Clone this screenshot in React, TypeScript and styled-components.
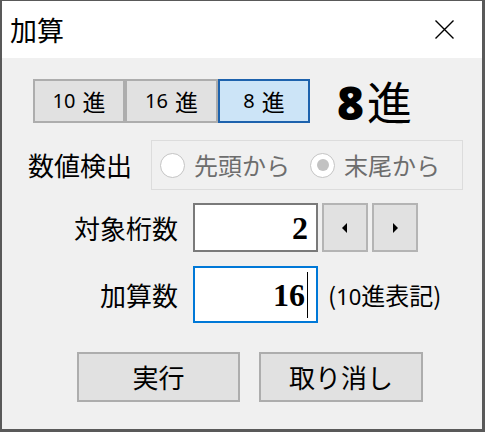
import styled, { createGlobalStyle } from "styled-components";

const GlobalStyle = createGlobalStyle`
  html, body {
    margin: 0;
    padding: 0;
    background: #ffffff;
  }
`;

const UI_FONT = `"Noto Sans CJK JP", "Noto Sans", sans-serif`;

const Window = styled.div`
  width: 485px;
  height: 432px;
  box-sizing: border-box;
  border-style: solid;
  border-color: #595959;
  border-width: 1px 3px 3px 2px;
  display: flex;
  flex-direction: column;
  background: #f0f0f0;
  font-family: ${UI_FONT};
  color: #000;
`;

const TitleBar = styled.div`
  height: 57px;
  flex: none;
  background: #ffffff;
  display: flex;
  align-items: center;
  justify-content: space-between;
  padding: 0 28px 0 8px;
`;

const Title = styled.span`
  font-size: 27px;
  line-height: 1;
  font-weight: 400;
`;

const CloseIcon = styled.svg`
  width: 19px;
  height: 19px;
  display: block;
`;

const Body = styled.div`
  flex: 1;
  display: flex;
  flex-direction: column;
`;

const Row = styled.div<{ $top: number; $left: number; $height: number }>`
  display: flex;
  align-items: center;
  margin-top: ${(p) => p.$top}px;
  padding-left: ${(p) => p.$left}px;
  height: ${(p) => p.$height}px;
`;

const SegGroup = styled.div`
  display: flex;
  height: 100%;
`;

const SegButton = styled.div<{ $active?: boolean; $width: number }>`
  width: ${(p) => p.$width}px;
  height: 100%;
  box-sizing: border-box;
  border: 2px solid ${(p) => (p.$active ? "#1d62ad" : "#adadad")};
  background: ${(p) => (p.$active ? "#cce4f7" : "#e1e1e1")};
  display: flex;
  align-items: center;
  justify-content: center;
  gap: 7px;
  font-size: 23px;
  line-height: 1;
`;

const SegNum = styled.span`
  font-family: "Noto Sans", sans-serif;
  font-size: 20px;
`;

const BigLabel = styled.div`
  margin-left: 27px;
  font-size: 45px;
  line-height: 1;
  display: flex;
  align-items: baseline;
`;

const BigNum = styled.span`
  font-family: "Open Sans", "Noto Sans", sans-serif;
  font-weight: 800;
  font-size: 46px;
  margin-right: 3px;
`;

const Label = styled.div<{ $width: number; $align?: string }>`
  width: ${(p) => p.$width}px;
  flex: none;
  font-size: 26px;
  line-height: 1;
  text-align: ${(p) => p.$align || "left"};
`;

const GroupBox = styled.div`
  width: 312px;
  height: 100%;
  box-sizing: border-box;
  border: 1px solid #dcdcdc;
  display: flex;
  align-items: center;
  padding-left: 8px;
  gap: 20px;
`;

const RadioItem = styled.div`
  display: flex;
  align-items: center;
  gap: 9px;
  color: #6d6d6d;
  font-size: 24px;
  line-height: 1;
`;

const RadioCircle = styled.span<{ $checked?: boolean }>`
  width: 25px;
  height: 25px;
  box-sizing: border-box;
  border-radius: 50%;
  border: 1px solid #c4c4c4;
  background: #ffffff;
  display: flex;
  align-items: center;
  justify-content: center;

  &::after {
    content: "";
    display: ${(p) => (p.$checked ? "block" : "none")};
    width: 12px;
    height: 12px;
    border-radius: 50%;
    background: #c2c2c2;
  }
`;

const Field = styled.div<{ $focused?: boolean }>`
  width: 125px;
  height: 100%;
  margin-left: 15px;
  box-sizing: border-box;
  border: 2px solid ${(p) => (p.$focused ? "#0078d7" : "#7a7a7a")};
  background: #ffffff;
  display: flex;
  align-items: center;
  justify-content: flex-end;
  padding-right: 8px;
  font-family: "Liberation Serif", serif;
  font-weight: 700;
  font-size: 32px;
  line-height: 1;
`;

const Caret = styled.span`
  width: 1px;
  height: 46px;
  background: #000;
  margin-left: 2px;
`;

const SpinButton = styled.div`
  width: 46px;
  height: 100%;
  margin-left: 4px;
  box-sizing: border-box;
  border: 2px solid #b4b4b4;
  background: #e1e1e1;
  display: flex;
  align-items: center;
  justify-content: center;
`;

const Note = styled.span`
  margin-left: 10px;
  font-size: 24px;
  line-height: 1;
`;

const NoteNum = styled.span`
  font-family: "Noto Sans", sans-serif;
  font-size: 22px;
`;

const ActionButton = styled.div<{ $width: number }>`
  width: ${(p) => p.$width}px;
  height: 100%;
  box-sizing: border-box;
  border: 2px solid #adadad;
  background: #e1e1e1;
  display: flex;
  align-items: center;
  justify-content: center;
  font-size: 26px;
  line-height: 1;

  & + & {
    margin-left: 19px;
  }
`;

function Arrow({ dir }: { dir: "left" | "right" }) {
  return (
    <svg width="6" height="10" viewBox="0 0 6 10">
      {dir === "left" ? (
        <path d="M5 0 L0 5 L5 10 Z" fill="#000" />
      ) : (
        <path d="M1 0 L6 5 L1 10 Z" fill="#000" />
      )}
    </svg>
  );
}

export default function App() {
  return (
    <>
      <GlobalStyle />
      <Window>
        <TitleBar>
          <Title>加算</Title>
          <CloseIcon viewBox="0 0 19 19">
            <path d="M0.5 0.5 L18.5 18.5 M18.5 0.5 L0.5 18.5" stroke="#000" strokeWidth="1.4" />
          </CloseIcon>
        </TitleBar>
        <Body>
          <Row $top={21} $left={31} $height={44}>
            <SegGroup>
              <SegButton $width={92}>
                <SegNum>10</SegNum>進
              </SegButton>
              <SegButton $width={93}>
                <SegNum>16</SegNum>進
              </SegButton>
              <SegButton $width={92} $active>
                <SegNum>8</SegNum>進
              </SegButton>
            </SegGroup>
            <BigLabel>
              <BigNum>8</BigNum>進
            </BigLabel>
          </Row>

          <Row $top={17} $left={26} $height={50}>
            <Label $width={123}>数値検出</Label>
            <GroupBox>
              <RadioItem>
                <RadioCircle />
                先頭から
              </RadioItem>
              <RadioItem>
                <RadioCircle $checked />
                末尾から
              </RadioItem>
            </GroupBox>
          </Row>

          <Row $top={13} $left={0} $height={49}>
            <Label $width={176} $align="right">対象桁数</Label>
            <Field>2</Field>
            <SpinButton>
              <Arrow dir="left" />
            </SpinButton>
            <SpinButton>
              <Arrow dir="right" />
            </SpinButton>
          </Row>

          <Row $top={14} $left={0} $height={57}>
            <Label $width={176} $align="right">加算数</Label>
            <Field $focused>
              16
              <Caret />
            </Field>
            <Note>
              (<NoteNum>10</NoteNum>進表記)
            </Note>
          </Row>

          <Row $top={29} $left={75} $height={50}>
            <ActionButton $width={163}>実行</ActionButton>
            <ActionButton $width={164}>取り消し</ActionButton>
          </Row>
        </Body>
      </Window>
    </>
  );
}
